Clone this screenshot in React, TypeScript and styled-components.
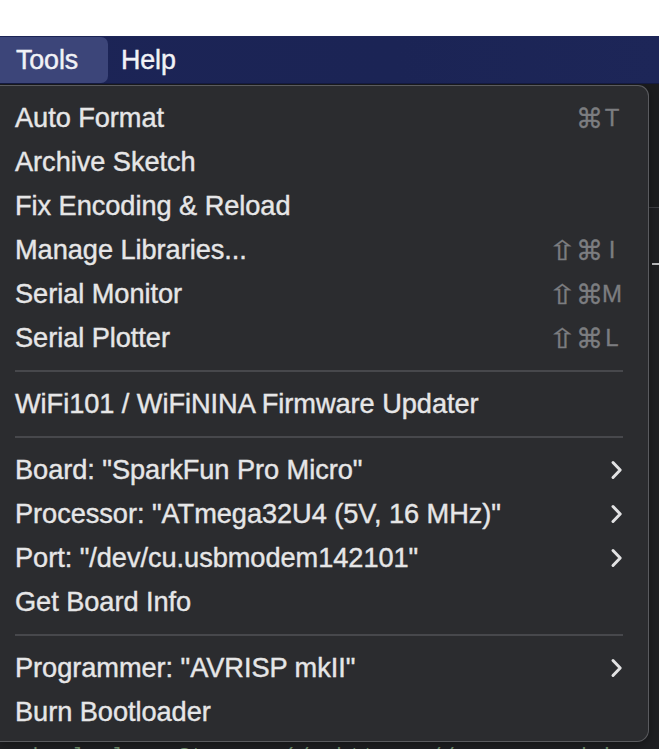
import React from "react";
import styled, { createGlobalStyle } from "styled-components";

const Global = createGlobalStyle`
  html, body { margin: 0; padding: 0; background: #ffffff; }
  body { font-family: "Liberation Sans", Arial, sans-serif; }
  #root { width: 659px; height: 749px; overflow: hidden; }
`;

const Page = styled.div`
  width: 659px;
  height: 749px;
  display: flex;
  flex-direction: column;
  background: #ffffff;
`;

const TopSpace = styled.div`
  height: 36px;
  flex: none;
  background: #ffffff;
`;

const MenuBar = styled.div`
  height: 48px;
  flex: none;
  display: flex;
  align-items: stretch;
  background: linear-gradient(90deg, #1c2456 0%, #1b2455 60%, #1d2658 100%);
  box-shadow: inset 0 -1px 0 #141a40;
`;

const MenuTitle = styled.div<{ $active?: boolean }>`
  display: flex;
  align-items: center;
  margin: 1px 0 1px 0;
  padding: ${(p) => (p.$active ? "0 30px 0 16px" : "0 14px 0 13px")};
  background: ${(p) => (p.$active ? "#3c4579" : "transparent")};
  border-radius: 0 7px 7px 0;
  color: #f1f2f6;
  font-size: 26.8px;
  letter-spacing: -0.1px;
  -webkit-text-stroke: 0.45px #f1f2f6;
`;

const Workspace = styled.div`
  position: relative;
  flex: 1;
  display: flex;
  flex-direction: column;
  background: #1d1e21;
  overflow: hidden;
`;

const EditorHeader = styled.div`
  height: 123px;
  flex: none;
  background: #1b1c1e;
  border-bottom: 1px solid #3d3e42;
`;

const EditorBody = styled.div`
  flex: 1;
  display: flex;
  flex-direction: column;
  justify-content: space-between;
  background: #1e1f22;
`;

const GutterMark = styled.div`
  margin: 55px 0 0 652px;
  width: 7px;
  height: 2px;
  background: #b9babd;
`;

const CodeLine = styled.div`
  height: 5px;
  overflow: hidden;
  padding-left: 6px;
  font-family: "Liberation Mono", monospace;
  font-size: 22px;
  line-height: 30px;
  color: #6f8d6c;
  white-space: pre;
`;

const CodeInner = styled.div`
  margin-top: -1px;
`;

const Dropdown = styled.div`
  position: absolute;
  top: 1px;
  left: 0;
  width: 649px;
  box-sizing: border-box;
  background: #2b2c2f;
  border: 1.5px solid #5a5b5f;
  border-left: none;
  border-radius: 0 11px 12px 0;
  padding: 10px 0 7px 0;
  display: flex;
  flex-direction: column;
  box-shadow: 0 2px 8px rgba(0, 0, 0, 0.35);
`;

const Item = styled.div`
  height: 44px;
  display: flex;
  align-items: center;
  justify-content: space-between;
  padding: 0 25px 0 15px;
  color: #e6e6e7;
  font-size: 27.2px;
  letter-spacing: -0.05px;
  -webkit-text-stroke: 0.4px #e6e6e7;
  white-space: nowrap;
`;

const Label = styled.span``;

const Shortcut = styled.span`
  display: flex;
  align-items: center;
  color: #7c7d80;
  -webkit-text-stroke: 0.3px #7c7d80;
  margin-right: -1px;
  line-height: 1;
`;

const Mod = styled.span<{ $wide?: boolean }>`
  display: inline-block;
  width: ${(p) => (p.$wide ? "27px" : "24px")};
  text-align: center;
  font-family: "DejaVu Sans", sans-serif;
  font-size: 27px;
  line-height: 1;
  transform: ${(p) => (p.$wide ? "scaleX(1.3)" : "none")};
  -webkit-text-stroke: 0.3px #7c7d80;
`;

const Key = styled.span`
  width: 24px;
  text-align: center;
  font-family: "Liberation Sans", Arial, sans-serif;
  font-size: 24px;
  line-height: 1;
`;

const Separator = styled.div`
  height: 22px;
  display: flex;
  align-items: center;
  padding: 0 25px 0 15px;
  &::after {
    content: "";
    flex: 1;
    height: 2px;
    background: #47484c;
  }
`;

const Chevron = () => (
  <svg width="13" height="20" viewBox="0 0 13 20">
    <path
      d="M3 2.5 L10.2 10 L3 17.5"
      fill="none"
      stroke="#e2e2e3"
      strokeWidth="3"
      strokeLinecap="round"
      strokeLinejoin="round"
    />
  </svg>
);

type Entry =
  | { kind: "item"; label: string; mods?: string[]; keyChar?: string; submenu?: boolean }
  | { kind: "sep" };

const entries: Entry[] = [
  { kind: "item", label: "Auto Format", mods: ["⌘"], keyChar: "T" },
  { kind: "item", label: "Archive Sketch" },
  { kind: "item", label: "Fix Encoding & Reload" },
  { kind: "item", label: "Manage Libraries...", mods: ["⇧", "⌘"], keyChar: "I" },
  { kind: "item", label: "Serial Monitor", mods: ["⇧", "⌘"], keyChar: "M" },
  { kind: "item", label: "Serial Plotter", mods: ["⇧", "⌘"], keyChar: "L" },
  { kind: "sep" },
  { kind: "item", label: "WiFi101 / WiFiNINA Firmware Updater" },
  { kind: "sep" },
  { kind: "item", label: 'Board: "SparkFun Pro Micro"', submenu: true },
  { kind: "item", label: 'Processor: "ATmega32U4 (5V, 16 MHz)"', submenu: true },
  { kind: "item", label: 'Port: "/dev/cu.usbmodem142101"', submenu: true },
  { kind: "item", label: "Get Board Info" },
  { kind: "sep" },
  { kind: "item", label: 'Programmer: "AVRISP mkII"', submenu: true },
  { kind: "item", label: "Burn Bootloader" },
];

export default function App() {
  return (
    <>
      <Global />
      <Page>
        <TopSpace />
        <MenuBar>
          <MenuTitle $active>Tools</MenuTitle>
          <MenuTitle>Help</MenuTitle>
        </MenuBar>
        <Workspace>
          <EditorHeader />
          <EditorBody>
            <GutterMark />
            <CodeLine>
              <CodeInner>{"  bool  lrn  Stream  (/  http  ://  www  arduino  cc/en  /Reference"}</CodeInner>
            </CodeLine>
          </EditorBody>
          <Dropdown>
            {entries.map((e, i) =>
              e.kind === "sep" ? (
                <Separator key={i} />
              ) : (
                <Item key={i}>
                  <Label>{e.label}</Label>
                  {e.submenu ? (
                    <Chevron />
                  ) : e.keyChar ? (
                    <Shortcut>
                      {e.mods?.map((m, j) => (
                        <Mod key={j} $wide={m === "⇧"}>
                          {m}
                        </Mod>
                      ))}
                      <Key>{e.keyChar}</Key>
                    </Shortcut>
                  ) : null}
                </Item>
              )
            )}
          </Dropdown>
        </Workspace>
      </Page>
    </>
  );
}
